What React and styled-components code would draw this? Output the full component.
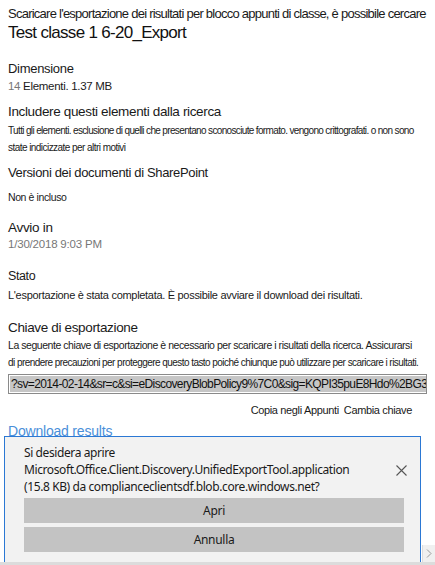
import React from 'react';
import styled, { createGlobalStyle } from 'styled-components';

const GlobalStyle = createGlobalStyle`
  html, body {
    margin: 0;
    padding: 0;
    background: #ffffff;
    overflow: hidden;
  }
  body {
    font-family: "Liberation Sans", Arial, sans-serif;
    color: #1a1a1a;
  }
`;

const Page = styled.div`
  position: relative;
  width: 435px;
  height: 565px;
  overflow: hidden;
  background: #fff;
`;

const Content = styled.div`
  padding: 6px 8px 0 8px;
  display: flex;
  flex-direction: column;
`;

const Intro = styled.div`
  font-size: 13px;
  letter-spacing: -0.75px;
  line-height: 16px;
  white-space: nowrap;
`;

const Title = styled.h1`
  margin: 1px 0 0 0;
  font-weight: normal;
  font-size: 17px;
  letter-spacing: -0.7px;
  line-height: 20px;
  color: #111;
`;

const Label = styled.div`
  margin-top: ${(p) => p.$top || 0}px;
  font-size: ${(p) => p.$size || 13}px;
  letter-spacing: ${(p) => p.$ls ?? -0.3}px;
  line-height: ${(p) => p.$lh || 18}px;
  color: #1a1a1a;
  white-space: nowrap;
`;

const Value = styled.div`
  margin-top: ${(p) => p.$top || 0}px;
  font-size: ${(p) => p.$size || 12}px;
  letter-spacing: ${(p) => p.$ls ?? -0.3}px;
  line-height: ${(p) => p.$lh || 16}px;
  color: ${(p) => p.$color || '#1a1a1a'};
`;

const Line = styled.span`
  display: block;
  white-space: nowrap;
  font-size: ${(p) => p.$size || 10}px;
  letter-spacing: ${(p) => p.$ls ?? -0.5}px;
`;

const Muted = styled.span`
  color: #777;
`;

const KeyBox = styled.div`
  margin-top: 3px;
  height: 20px;
  box-sizing: border-box;
  border: 1px solid #8a8a8a;
  background: #fff;
  padding: 1px;
  overflow: hidden;
  display: flex;
  align-items: stretch;
`;

const KeyText = styled.span`
  background: #c6c6c6;
  font-size: 12px;
  line-height: 16px;
  white-space: nowrap;
  padding-left: 1px;
  color: #111;
  letter-spacing: -0.62px;
`;

const Actions = styled.div`
  margin-top: 8px;
  display: flex;
  justify-content: flex-end;
  gap: 5px;
  font-size: 11px;
  letter-spacing: -0.35px;
  line-height: 16px;
  padding-right: 15px;
`;

const Action = styled.span`
  color: #1a1a1a;
`;

const DownloadLink = styled.a`
  margin-top: 4px;
  font-size: 14px;
  letter-spacing: -0.2px;
  color: #4a8fd9;
  text-decoration: none;
  line-height: 18px;
`;

const Prompt = styled.div`
  position: absolute;
  left: 4px;
  top: 436px;
  width: 417px;
  height: 126px;
  background: #f2f2f2;
  border: 1.5px solid #2b78d4;
  border-bottom: none;
  box-sizing: border-box;
  display: flex;
  flex-direction: column;
  padding: 7px 18px 0 19px;
  font-family: "Noto Sans", "Open Sans", sans-serif;
`;

const PromptHead = styled.div`
  display: flex;
  align-items: center;
  justify-content: space-between;
`;

const PromptText = styled.div`
  font-size: 12px;
  line-height: 17px;
  letter-spacing: -0.4px;
  color: #1a1a1a;
`;

const CloseButton = styled.button`
  background: none;
  border: none;
  padding: 0;
  margin-right: -6px;
  margin-top: 2px;
  width: 14px;
  height: 14px;
  display: flex;
  align-items: center;
  justify-content: center;
`;

const PromptButton = styled.button`
  margin-top: ${(p) => p.$top || 4}px;
  height: 25px;
  width: 380px;
  border: none;
  background: #c3c3c3;
  font-family: "Noto Sans", "Open Sans", sans-serif;
  font-size: 12px;
  letter-spacing: -0.3px;
  color: #1a1a1a;
  padding: 0;
`;

const ScrollArrow = styled.div`
  position: absolute;
  right: 0;
  top: 545px;
  width: 12px;
  height: 17px;
  background: #f0f0f0;
  border-left: 1px solid #ddd;
  display: flex;
  align-items: center;
  justify-content: center;
`;

const BottomStrip = styled.div`
  position: absolute;
  left: 0;
  right: 0;
  bottom: 0;
  height: 3px;
  background: #dcdcdc;
`;

export default function App() {
  return (
    <Page>
      <GlobalStyle />
      <Content>
        <Intro>Scaricare l'esportazione dei risultati per blocco appunti di classe, è possibile cercare</Intro>
        <Title>Test classe 1 6-20_Export</Title>

        <Label $top={18} $lh={16}>Dimensione</Label>
        <Value $top={1} $size={11.5}><Muted>14</Muted> Elementi. 1.37 MB</Value>

        <Label $top={9} $size={13.5} $ls={-0.35}>Includere questi elementi dalla ricerca</Label>
        <Value $top={1} $lh={17}>
          <Line $size={10} $ls={-0.65}>Tutti gli elementi. esclusione di quelli che presentano sconosciute formato. vengono crittografati. o non sono</Line>
          <Line $size={10} $ls={-0.55}>state indicizzate per altri motivi</Line>
        </Value>

        <Label $top={8} $size={13} $ls={-0.35}>Versioni dei documenti di SharePoint</Label>
        <Value $top={7} $size={10.5} $ls={-0.4}>Non è incluso</Value>

        <Label $top={16} $size={13.5} $ls={-0.3} $lh={14}>Avvio in</Label>
        <Value $top={1} $size={11.5} $ls={-0.2} $color="#777">1/30/2018 9:03 PM</Value>

        <Label $top={16} $size={12.5} $ls={-0.4} $lh={16}>Stato</Label>
        <Value $top={3} $size={11} $ls={-0.3}>L'esportazione è stata completata. È possibile avviare il download dei risultati.</Value>

        <Label $top={16} $size={13.5} $ls={-0.35}>Chiave di esportazione</Label>
        <Value $top={0} $lh={17}>
          <Line $size={10.5} $ls={-0.45}>La seguente chiave di esportazione è necessario per scaricare i risultati della ricerca. Assicurarsi</Line>
          <Line $size={10} $ls={-0.55}>di prendere precauzioni per proteggere questo tasto poiché chiunque può utilizzare per scaricare i risultati.</Line>
        </Value>
        <KeyBox>
          <KeyText>?sv=2014-02-14&amp;sr=c&amp;si=eDiscoveryBlobPolicy9%7C0&amp;sig=KQPI35puE8Hdo%2BG3qZ</KeyText>
        </KeyBox>
        <Actions>
          <Action>Copia negli Appunti</Action>
          <Action>Cambia chiave</Action>
        </Actions>

        <DownloadLink href="#">Download results</DownloadLink>
      </Content>

      <Prompt>
        <PromptHead>
          <PromptText>
            Si desidera aprire
            <br />
            Microsoft.Office.Client.Discovery.UnifiedExportTool.application
            <br />
            (15.8 KB) da complianceclientsdf.blob.core.windows.net?
          </PromptText>
          <CloseButton aria-label="Chiudi">
            <svg width="11" height="11" viewBox="0 0 11 11">
              <path d="M0.5 0.5 L10.5 10.5 M10.5 0.5 L0.5 10.5" stroke="#555" strokeWidth="1.1" fill="none" />
            </svg>
          </CloseButton>
        </PromptHead>
        <PromptButton $top={3}>Apri</PromptButton>
        <PromptButton $top={4}>Annulla</PromptButton>
      </Prompt>

      <ScrollArrow>
        <svg width="6" height="9" viewBox="0 0 6 9">
          <path d="M1 0.5 L5 4.5 L1 8.5" stroke="#999" strokeWidth="1" fill="none" />
        </svg>
      </ScrollArrow>
      <BottomStrip />
    </Page>
  );
}
